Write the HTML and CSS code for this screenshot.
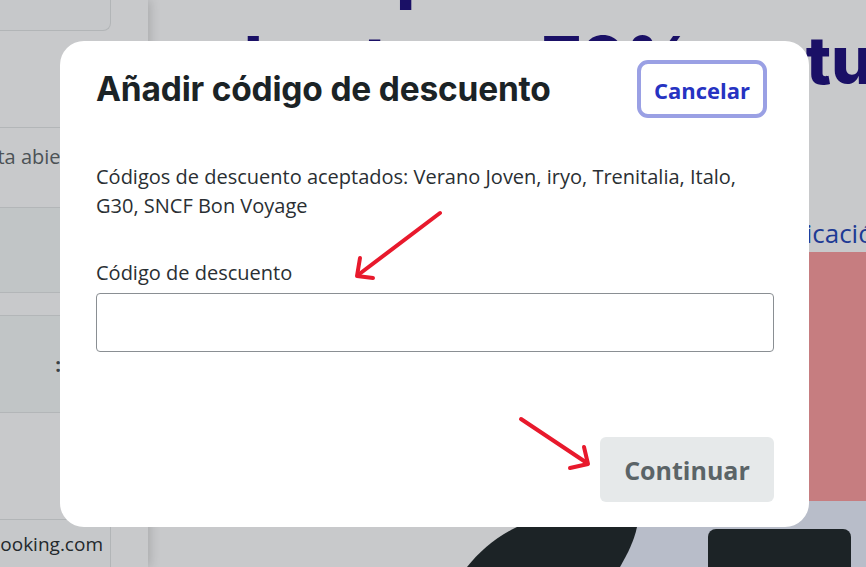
FILE: index.html
```html
<!DOCTYPE html>
<html lang="es">
<head>
<meta charset="utf-8">
<title>Añadir código de descuento</title>
<link rel="stylesheet" href="styles.css">
</head>
<body>
<div class="page">
  <aside class="sidebar">
    <div class="side-card side-card-top"></div>
    <div class="side-gap-a"></div>
    <div class="side-row side-row-text"><span class="side-text side-text-open">Vuelta abierta</span></div>
    <div class="side-gap-b"></div>
    <div class="side-row side-band band-1"></div>
    <div class="side-row side-light light-1"></div>
    <div class="side-row side-band band-2"><span class="side-dots">:</span></div>
    <div class="side-row side-light light-2"></div>
    <div class="side-card side-card-bottom"><span class="side-text side-text-booking">Booking.com</span></div>
  </aside>

  <main class="main">
    <h1 class="hero-title">Compra tus billetes ahora mismo y<br>hasta un 70% en tu</h1>
    <div class="hero-grid">
      <div class="hero-left"></div>
      <div class="hero-right">
        <a class="hero-link">la aplicación</a>
        <div class="promo-img"></div>
        <div class="promo-bottom">
          <div class="promo-card"></div>
        </div>
      </div>
    </div>
    <svg class="blob" width="200" height="40" viewBox="0 0 200 40" aria-hidden="true">
      <path d="M69 0 L189 0 C186 14 180 26 172 40 L19 40 C32 24 48 10 69 0 Z" fill="#1c2326"/>
    </svg>
  </main>

  <div class="modal" role="dialog">
    <div class="modal-header">
      <h2 class="modal-title">Añadir código de descuento</h2>
      <button class="btn-cancel">Cancelar</button>
    </div>
    <p class="modal-desc">Códigos de descuento aceptados: Verano Joven, iryo, Trenitalia, Italo, G30, SNCF Bon Voyage</p>
    <label class="field-label" for="code">Código de descuento</label>
    <input class="field-input" id="code" type="text">
    <div class="modal-footer">
      <button class="btn-continue">Continuar</button>
    </div>
  </div>

  <svg class="arrows" width="866" height="567" viewBox="0 0 866 567" aria-hidden="true">
    <g fill="none" stroke="#e8192c" stroke-width="4" stroke-linecap="round" stroke-linejoin="round">
      <path d="M440 213 L358 275"/>
      <path d="M360 258 L357 276 L373 278"/>
      <path d="M521 419 L587 463"/>
      <path d="M584 447 L588 464 L570 468"/>
    </g>
  </svg>
</div>
</body>
</html>
```

FILE: styles.css
```css
* { box-sizing: border-box; }

html, body {
  margin: 0;
  padding: 0;
}

body {
  width: 866px;
  height: 567px;
  overflow: hidden;
  background: #c8c9cb;
  font-family: "Open Sans", "Noto Sans", "DejaVu Sans", sans-serif;
}

.page {
  position: relative;
  display: flex;
  width: 866px;
  height: 567px;
  overflow: hidden;
  background: #c8c9cb;
}

/* ---------- sidebar ---------- */
.sidebar {
  width: 148px;
  flex: none;
  display: flex;
  flex-direction: column;
  background: #c8c9cb;
  box-shadow: 2px 0 10px rgba(0, 0, 0, 0.16);
  position: relative;
  z-index: 1;
  overflow: hidden;
}

.side-card {
  width: 111px;
  background: #c6c8ca;
  border-right: 1px solid #b2b5b7;
  flex: none;
}

.side-card-top {
  height: 31px;
  border-bottom: 1px solid #b2b5b7;
  border-bottom-right-radius: 8px;
}

.side-gap-a { height: 96px; flex: none; }
.side-gap-b { height: 23px; flex: none; }

.side-row {
  flex: none;
  border-top: 1px solid #b3b6b8;
  display: flex;
  align-items: center;
}

.side-row-text { height: 57px; }
.band-1 { height: 85px; background: #c1c5c6; }
.light-1 { height: 23px; }
.band-2 { height: 97px; background: #c1c5c6; justify-content: flex-end; padding-right: 87px; }
.light-2 { height: 107px; }

.side-text {
  white-space: nowrap;
  font-size: 20px;
  color: #4c5256;
}

.side-text-open { margin-left: -43px; }

.side-dots {
  font-size: 20px;
  color: #3a4044;
  font-weight: 700;
}

.side-card-bottom {
  height: 48px;
  border-top: 1px solid #b2b5b7;
  border-top-right-radius: 8px;
  display: flex;
  align-items: center;
}

.side-text-booking { margin-left: -12px; font-size: 19px; color: #23292c; }

/* ---------- main ---------- */
.main {
  flex: 1;
  position: relative;
  display: flex;
  flex-direction: column;
}

.hero-title {
  margin: -72px 0 0 96px;
  font-family: "Inter", "Liberation Sans", sans-serif;
  font-size: 66.5px;
  line-height: 88px;
  font-weight: 800;
  color: #1a1066;
  white-space: nowrap;
}

.hero-grid {
  display: grid;
  grid-template-columns: 412px 306px;
  flex: 1;
}

.hero-right {
  display: flex;
  flex-direction: column;
}

.hero-link {
  display: block;
  margin: 111px 0 0 181px;
  height: 37px;
  font-size: 26px;
  line-height: 37px;
  color: #1d3a94;
  white-space: nowrap;
}

.promo-img {
  height: 249px;
  background: #c67d80;
  flex: none;
}

.promo-bottom {
  flex: 1;
  background: #b8bdc9;
  padding: 28px 0 0 148px;
}

.promo-card {
  width: 143px;
  height: 60px;
  background: #1c2326;
  border-radius: 8px 8px 0 0;
}

.blob {
  position: absolute;
  left: 300px;
  top: 527px;
}

/* ---------- modal ---------- */
.modal {
  position: absolute;
  left: 60px;
  top: 41px;
  width: 749px;
  height: 486px;
  background: #ffffff;
  border-radius: 24px;
  padding: 19px 35px 25px 36px;
  display: flex;
  flex-direction: column;
  z-index: 5;
}

.modal-header {
  display: flex;
  justify-content: space-between;
  align-items: center;
  height: 58px;
}

.modal-title {
  margin: 0;
  font-family: "Inter", "Liberation Sans", sans-serif;
  font-size: 33.5px;
  font-weight: 700;
  color: #1b2326;
  letter-spacing: -0.2px;
}

.btn-cancel {
  height: 58px;
  width: 130px;
  margin-right: 7px;
  background: #ffffff;
  border: 4px solid #9aa0e4;
  border-radius: 11px;
  font-family: "Open Sans", "Noto Sans", sans-serif;
  font-size: 22px;
  font-weight: 700;
  color: #2633c2;
  padding: 2px 0 0;
}

.modal-desc {
  margin: 44px 0 0;
  font-size: 20px;
  line-height: 29px;
  color: #2a2f33;
  max-width: 660px;
}

.field-label {
  display: block;
  margin-top: 38px;
  font-size: 20px;
  line-height: 29px;
  color: #2a2f33;
}

.field-input {
  margin-top: 6px;
  height: 59px;
  width: 678px;
  border: 1px solid #8a8f93;
  border-radius: 4px;
  background: #ffffff;
}

.modal-footer {
  margin-top: auto;
  display: flex;
  justify-content: flex-end;
}

.btn-continue {
  width: 174px;
  height: 65px;
  border: none;
  border-radius: 6px;
  background: #e6e9ea;
  font-family: "Open Sans", "Noto Sans", sans-serif;
  font-size: 25px;
  font-weight: 700;
  color: #5b6467;
  padding: 0;
}

/* ---------- annotation arrows ---------- */
.arrows {
  position: absolute;
  left: 0;
  top: 0;
  z-index: 10;
  pointer-events: none;
}
```
